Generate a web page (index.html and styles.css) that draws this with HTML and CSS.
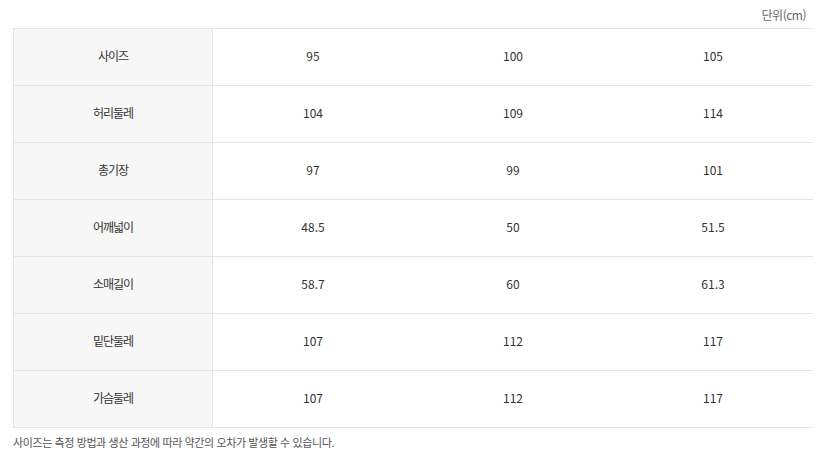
FILE: index.html
```html
<!DOCTYPE html>
<html lang="ko">
<head>
<meta charset="utf-8">
<link rel="stylesheet" href="styles.css">
</head>
<body>
<div class="wrap">
  <div class="unit">단위(cm)</div>
  <table class="size-table">
    <tbody>
      <tr><th>사이즈</th><td>95</td><td>100</td><td>105</td></tr>
      <tr><th>허리둘레</th><td>104</td><td>109</td><td>114</td></tr>
      <tr><th>총기장</th><td>97</td><td>99</td><td>101</td></tr>
      <tr><th>어깨넓이</th><td>48.5</td><td>50</td><td>51.5</td></tr>
      <tr><th>소매길이</th><td>58.7</td><td>60</td><td>61.3</td></tr>
      <tr><th>밑단둘레</th><td>107</td><td>112</td><td>117</td></tr>
      <tr><th>가슴둘레</th><td>107</td><td>112</td><td>117</td></tr>
    </tbody>
  </table>
  <p class="note">사이즈는 측정 방법과 생산 과정에 따라 약간의 오차가 발생할 수 있습니다.</p>
</div>
</body>
</html>
```
FILE: styles.css
```css
html, body {
  margin: 0;
  padding: 0;
  background: #fff;
}
body {
  font-family: "Noto Sans CJK KR", "Noto Sans", sans-serif;
  font-size: 12px;
  color: #333;
}
.wrap {
  width: 800px;
  padding-left: 13px;
}
.unit {
  height: 28px;
  line-height: 30px;
  text-align: right;
  padding-right: 7px;
  color: #666;
  font-size: 12px;
  letter-spacing: -0.5px;
}
.size-table {
  width: 800px;
  border-collapse: collapse;
  table-layout: fixed;
  border-top: 1px solid #e5e5e5;
}
.size-table th,
.size-table td {
  height: 53px;
  padding: 0 0 3px 0;
  line-height: 16px;
  text-align: center;
  vertical-align: middle;
  font-weight: normal;
  border-bottom: 1px solid #e5e5e5;
}
.size-table th {
  width: 198px;
  background: #f7f7f7;
  border-left: 1px solid #e5e5e5;
  border-right: 1px solid #e5e5e5;
  color: #333;
  letter-spacing: -1px;
}
.size-table td {
  width: 200px;
  color: #333;
}
.note {
  margin: 0;
  padding-top: 5px;
  line-height: 18px;
  color: #555;
  font-size: 11px;
  letter-spacing: -0.4px;
}
```
